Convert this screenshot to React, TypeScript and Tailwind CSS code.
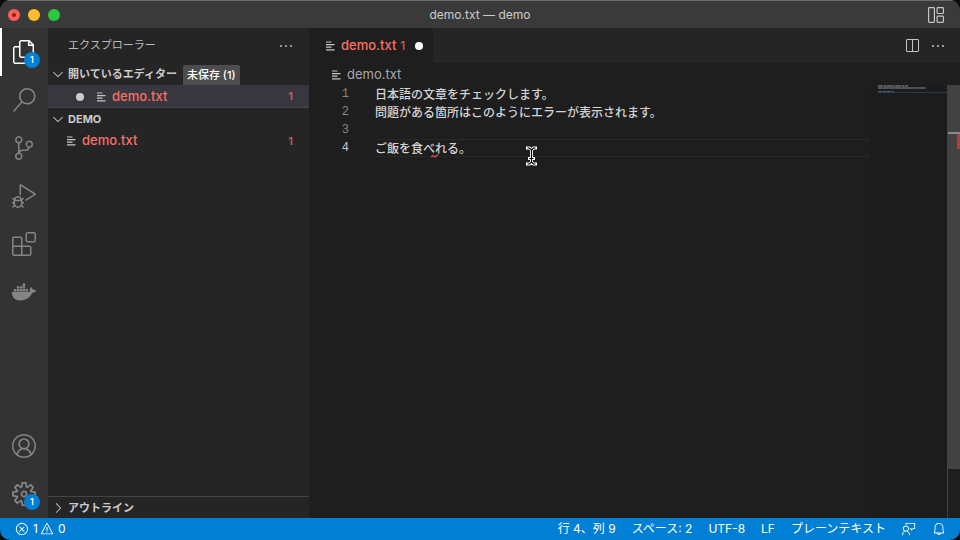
import type { ReactNode } from "react";
import {
  VscAccount,
  VscBell,
  VscChevronDown,
  VscChevronRight,
  VscDebugAlt,
  VscEllipsis,
  VscError,
  VscExtensions,
  VscFeedback,
  VscFiles,
  VscSearch,
  VscSettingsGear,
  VscSourceControl,
  VscSplitHorizontal,
  VscWarning,
} from "react-icons/vsc";
import { FaDocker } from "react-icons/fa";

const LINES = [
  "日本語の文章をチェックします。",
  "問題がある箇所はこのようにエラーが表示されます。",
  "",
  "ご飯を食べれる。",
];

const CURRENT_LINE = 4;

function FileLines({ className = "" }: { className?: string }) {
  return (
    <svg
      className={`shrink-0 ${className}`}
      width="10"
      height="10"
      viewBox="0 0 10 10"
      fill="none"
      stroke="#c5c8c6"
      aria-hidden="true"
    >
      <path d="M1 1h5.5M1 3.6h8.5M1 6.2h5.5M1 8.8h8.5" strokeWidth="1.2" />
    </svg>
  );
}

function ActivityItem({
  label,
  active = false,
  badge,
  children,
}: {
  label: string;
  active?: boolean;
  badge?: number;
  children: ReactNode;
}) {
  return (
    <button
      type="button"
      aria-label={label}
      className={`relative flex h-12 w-full items-center justify-center border-l-2 pr-0.5 text-2xl ${
        active ? "border-white text-white" : "border-transparent text-[#858585]"
      }`}
    >
      {children}
      {badge && (
        <span className="absolute right-2 bottom-2 flex size-4 items-center justify-center rounded-full bg-[#007fd4] text-[9px] font-semibold text-white">
          {badge}
        </span>
      )}
    </button>
  );
}

function ActivityBar() {
  return (
    <nav className="flex w-12 shrink-0 flex-col justify-between bg-[#333333]">
      <div>
        <ActivityItem label="エクスプローラー" active badge={1}>
          <VscFiles />
        </ActivityItem>
        <ActivityItem label="検索">
          <VscSearch />
        </ActivityItem>
        <ActivityItem label="ソース管理">
          <VscSourceControl />
        </ActivityItem>
        <ActivityItem label="実行とデバッグ">
          <VscDebugAlt />
        </ActivityItem>
        <ActivityItem label="拡張機能">
          <VscExtensions />
        </ActivityItem>
        <ActivityItem label="Docker">
          <FaDocker />
        </ActivityItem>
      </div>
      <div>
        <ActivityItem label="アカウント">
          <VscAccount />
        </ActivityItem>
        <ActivityItem label="管理" badge={1}>
          <VscSettingsGear />
        </ActivityItem>
      </div>
    </nav>
  );
}

function SectionHeader({
  title,
  open = true,
  children,
}: {
  title: string;
  open?: boolean;
  children?: ReactNode;
}) {
  return (
    <button
      type="button"
      aria-expanded={open}
      className="flex h-[22px] w-full items-center pl-0.5 text-[11px] font-bold text-[#cccccc]"
    >
      <span className="mr-0.5 text-base">
        {open ? <VscChevronDown /> : <VscChevronRight />}
      </span>
      {title}
      {children}
    </button>
  );
}

function Sidebar() {
  return (
    <aside className="flex w-[261px] shrink-0 flex-col bg-[#252526]">
      <div className="flex h-[35px] items-center justify-between pr-[15px] pl-5 text-[11px] text-[#bbbbbb]">
        <h2>エクスプローラー</h2>
        <button type="button" aria-label="その他の操作" className="text-base">
          <VscEllipsis />
        </button>
      </div>

      <SectionHeader title="開いているエディター">
        <span className="ml-1.5 flex h-5 items-center self-end rounded-t-xs bg-[#4d4d4d] px-1 font-medium text-white">
          未保存 (1)
        </span>
      </SectionHeader>
      <button
        type="button"
        className="flex h-[22px] w-full items-center bg-[#37373d] pt-px pr-4 pl-7 text-[13px] font-medium text-[#f97068]"
      >
        <span className="mr-3 size-2 rounded-full bg-[#cccccc]" />
        <FileLines className="mr-1.5" />
        demo.txt
        <span className="ml-auto text-[11px] font-semibold opacity-75">1</span>
      </button>

      <div className="border-t border-[#454546]">
        <SectionHeader title="DEMO" />
      </div>
      <button
        type="button"
        className="flex h-[22px] w-full items-center pr-4 pl-[18px] text-[13px] font-medium text-[#f97068]"
      >
        <FileLines className="mr-1.5" />
        demo.txt
        <span className="ml-auto text-[11px] font-semibold opacity-75">1</span>
      </button>

      <div className="mt-auto h-[22px] border-t border-[#454546]">
        <SectionHeader title="アウトライン" open={false} />
      </div>
    </aside>
  );
}

function Minimap() {
  return (
    <div className="w-[77px] shrink-0 bg-[#1c1c1c] pl-2">
      <svg width="69" height="10" viewBox="0 0 69 10" fill="none" aria-hidden="true">
        <path d="M0 1h30" stroke="#6c6c6c" strokeWidth="1.4" strokeDasharray="5 .5 3 .5" />
        <path d="M0 3h48" stroke="#686868" strokeWidth="1.4" strokeDasharray="4 .5 7 .5" />
        <path d="M0 7.5h69" stroke="#1d3b56" />
        <path d="M0 6.7h16" stroke="#4f6879" strokeDasharray="4 .5" />
      </svg>
    </div>
  );
}

function OverviewRuler() {
  return (
    <div className="w-[13px] shrink-0 border-l border-[#3f3f40]">
      <div className="h-[384px] bg-[#424242] pt-[47px]">
        <div className="h-0.5 bg-[#8a8a8a]" />
        <div className="ml-auto h-[15px] w-[3px] bg-[#b04040]" />
      </div>
    </div>
  );
}

function Editor() {
  return (
    <main className="flex min-w-0 flex-1 flex-col bg-[#1e1e1e]">
      <div className="flex h-[35px] justify-between bg-[#252526]">
        <div role="tablist" className="flex">
          <button
            type="button"
            role="tab"
            aria-selected="true"
            className="flex items-center bg-[#1e1e1e] pt-px pr-2.5 pl-4 text-[13px] font-medium text-[#f97068]"
          >
            <FileLines className="mr-1.5" />
            demo.txt
            <span className="ml-1 text-[12px] opacity-80">1</span>
            <span className="ml-2.5 size-2 rounded-full bg-white" />
          </button>
        </div>
        <div className="flex items-center gap-2.5 pr-3.5 text-base text-[#c5c5c5]">
          <button type="button" aria-label="エディターを分割">
            <VscSplitHorizontal />
          </button>
          <button type="button" aria-label="その他の操作">
            <VscEllipsis />
          </button>
        </div>
      </div>

      <div className="flex h-[22px] items-center pt-px pl-[22px] text-[13px] text-[#a9a9a9]">
        <FileLines className="mr-1.5" />
        demo.txt
      </div>

      <div className="flex min-h-0 flex-1">
        <ol className="w-10 shrink-0 text-right font-['Liberation_Mono','DejaVu_Sans_Mono',monospace] text-[12px] leading-[18px] text-[#858585]">
          {LINES.map((_, i) => (
            <li key={i} className={i + 1 === CURRENT_LINE ? "text-[#c6c6c6]" : ""}>
              {i + 1}
            </li>
          ))}
        </ol>
        <div className="relative ml-[26px] min-w-0 flex-1">
          {/* current line */}
          <div className="absolute inset-x-0 top-[54px] h-[18px] border-y border-[#282828]" />
          <textarea
            aria-label="demo.txt"
            spellCheck={false}
            defaultValue={LINES.join("\n")}
            className="relative block size-full resize-none bg-transparent font-['Noto_Sans_CJK_JP',sans-serif] text-[12px] leading-[18px] font-medium text-[#d4d4d4] outline-none"
          />
          {/* error squiggle */}
          <svg
            className="absolute top-[69px] left-14"
            width="8"
            height="4"
            viewBox="0 0 8 4"
            fill="none"
            aria-hidden="true"
          >
            <path d="M0 3l2-1.5 2 1.5 3-2.5" stroke="#f14c4c" strokeWidth="1.2" />
          </svg>
          {/* text cursor */}
          <svg
            className="absolute top-[61px] left-[151px]"
            width="11"
            height="20"
            viewBox="0 0 11 20"
            fill="none"
            aria-hidden="true"
          >
            <path
              d="M1.5 2h2l2 2 2-2h2M1.5 18h2l2-2 2 2h2M5.5 4v12M3.5 12.5h4"
              stroke="#fff"
              strokeWidth="3"
              strokeLinecap="square"
            />
            <path
              d="M1.5 2h2l2 2 2-2h2M1.5 18h2l2-2 2 2h2M5.5 4v12M3.5 12.5h4"
              stroke="#000"
              strokeWidth="1.2"
            />
          </svg>
        </div>
        <Minimap />
        <OverviewRuler />
      </div>
    </main>
  );
}

function StatusBar() {
  return (
    <footer className="flex h-[22px] shrink-0 items-center justify-between bg-[#007fd4] pr-3.5 pl-[15px] text-[12px] text-white">
      <button type="button" className="flex items-center gap-0.5">
        <VscError className="text-sm" />
        <span className="ml-0.5">1</span>
        <VscWarning className="text-sm" />
        <span className="ml-0.5">0</span>
      </button>
      <div className="flex items-center gap-4">
        <button type="button">行 4、列 9</button>
        <button type="button">スペース: 2</button>
        <button type="button">UTF-8</button>
        <button type="button">LF</button>
        <button type="button">プレーンテキスト</button>
        <button type="button" aria-label="フィードバック" className="text-sm">
          <VscFeedback />
        </button>
        <button type="button" aria-label="通知" className="text-sm">
          <VscBell />
        </button>
      </div>
    </footer>
  );
}

export default function App() {
  return (
    <div className="h-screen bg-[#0c0c0c]">
      <div className="flex h-full flex-col overflow-hidden rounded-[10px] font-['Inter','Noto_Sans_CJK_JP',sans-serif]">
        <header className="relative flex h-7 shrink-0 items-center justify-center border-t border-[#6a6a6a] bg-[#3a3a3a] text-[12px] text-[#cccccc]">
          <div className="absolute left-2 flex gap-2">
            <button
              type="button"
              aria-label="閉じる"
              className="flex size-3 items-center justify-center rounded-full bg-[#ff5f57]"
            >
              <span className="size-1 rounded-full bg-[#8a1a12]" />
            </button>
            <button type="button" aria-label="最小化" className="size-3 rounded-full bg-[#febc2e]" />
            <button type="button" aria-label="最大化" className="size-3 rounded-full bg-[#28c840]" />
          </div>
          <h1>demo.txt — demo</h1>
          <button type="button" aria-label="レイアウト" className="absolute right-4">
            <svg
              width="16"
              height="16"
              viewBox="0 0 16 16"
              fill="none"
              stroke="#c5c5c5"
              strokeWidth="1.2"
              aria-hidden="true"
            >
              <rect x=".6" y=".6" width="5.8" height="14.8" rx=".8" />
              <rect x="9.1" y=".6" width="6.3" height="5.9" rx=".8" />
              <rect x="9.1" y="9.1" width="6.3" height="6.3" rx=".8" />
            </svg>
          </button>
        </header>
        <div className="flex min-h-0 flex-1">
          <ActivityBar />
          <Sidebar />
          <Editor />
        </div>
        <StatusBar />
      </div>
    </div>
  );
}
